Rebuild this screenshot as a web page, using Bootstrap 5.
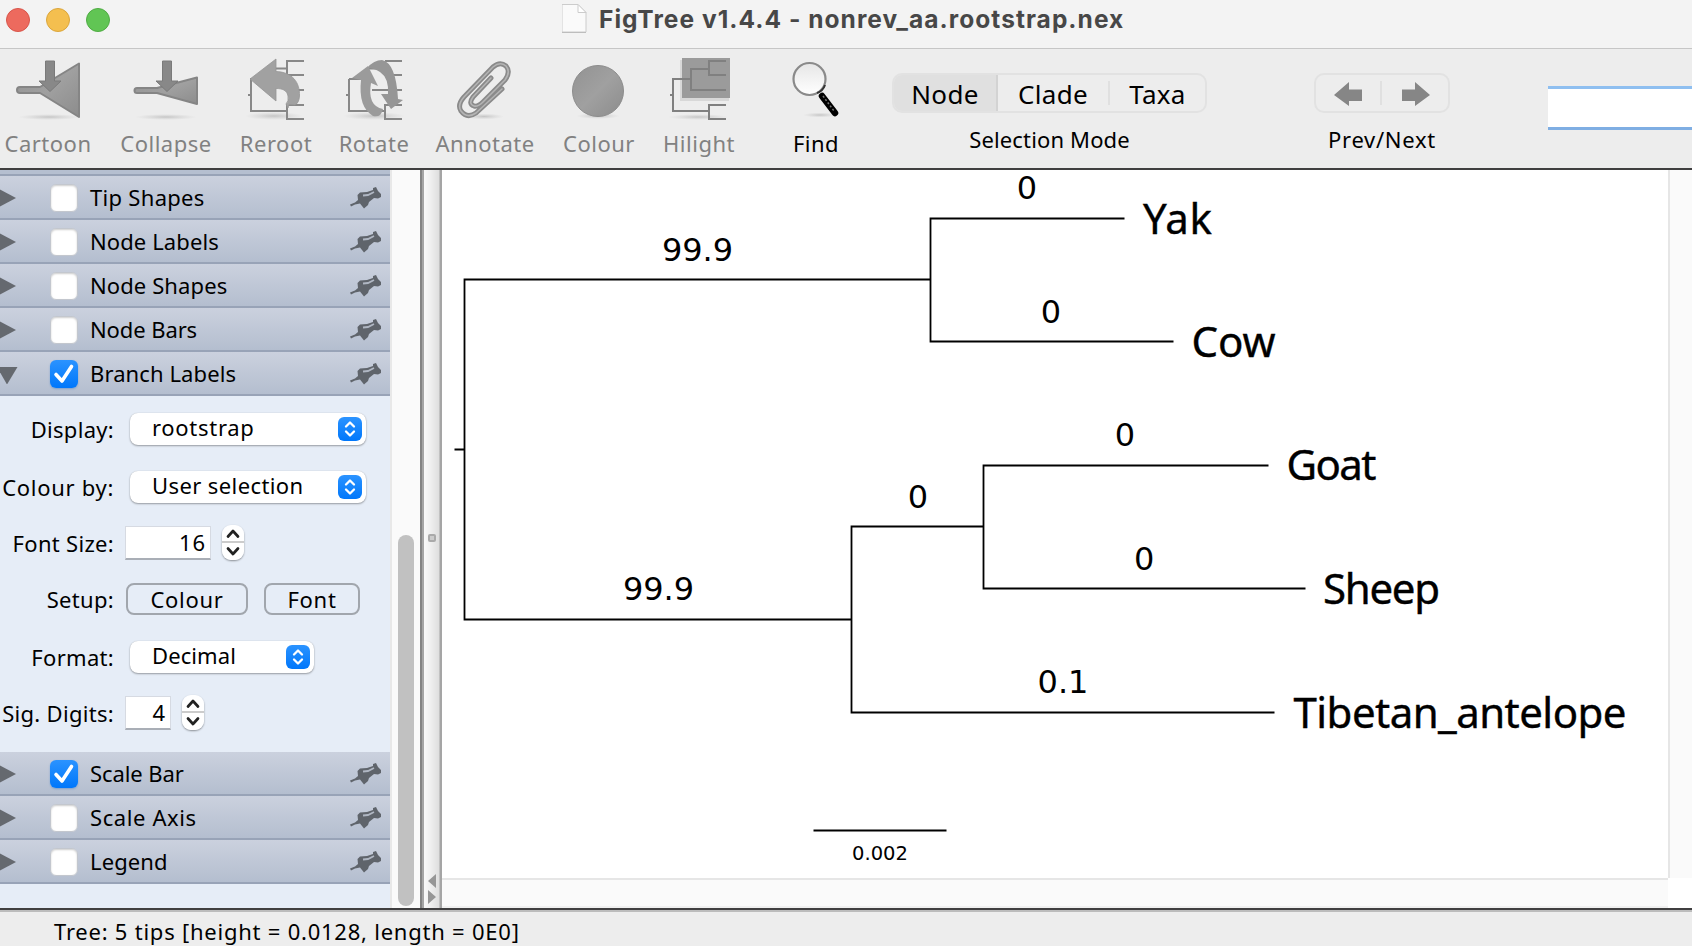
<!DOCTYPE html>
<html lang="en">
<head>
<meta charset="utf-8">
<title>FigTree v1.4.4 - nonrev_aa.rootstrap.nex</title>
<link href="https://cdn.jsdelivr.net/npm/bootstrap@5.3.0/dist/css/bootstrap.min.css" rel="stylesheet">
<style>
  body{width:1692px;height:946px;font:22px/30px "Noto Sans","Open Sans",sans-serif;color:#000;background:#ededed}
  svg{display:block;flex:none}
  .titlebar{height:49px;background:#f3f3f3;border-bottom:1px solid #c6c6c6}
  .titlebar h1{font:700 24.5px/38px Inter,"Liberation Sans",sans-serif;color:#474747;margin-left:12px;letter-spacing:1.04px}
  .lights{width:562px;padding-left:6px;gap:16px}
  .light{width:24px;height:24px;border-radius:50%;border:1px solid}
  .toolbar{height:121px;border-bottom:2px solid #403f40;background:#ededed}
  .tool{color:#818181;padding-top:7px;letter-spacing:.5px}
  .tool span{margin-top:4px}
  .w96{width:96px}.w140{width:140px}.w80{width:80px}.w116{width:116px}.w106{width:106px}.w122{width:122px}.w78{width:78px}
  .tool-group{padding-top:24px}
  .seg{height:40px;border:2px solid #e2e2e2;border-radius:10px;font-size:26px;line-height:36px;overflow:hidden}
  .seg>div{padding-top:1px;letter-spacing:.3px}
  .seg-on{background:#e0e0e0;border-right:2px solid #d3d3d3}
  .seg-line{width:2px;height:24px;background:#e0e0e0}
  .caption{line-height:30px;margin-top:11px;letter-spacing:.15px}
  .search{width:144px;height:44px;margin-top:37px;background:#fff;border-top:3px solid #8fbff0;border-bottom:3px solid #7faee3}
  .workarea{height:738px}
  .side{width:390px;background:#e6edf7}
  .strip{height:6px;background:#b5bfd0;border-bottom:2px solid #98a3b7}
  .head{height:44px;background:linear-gradient(#cbd1de,#b4becf);border-bottom:2px solid #98a3b7;padding:1px 8px 0 0;letter-spacing:.1px}
  .head>svg{margin-top:1px}
  .tri{width:50px}
  .tri svg{margin-top:1px}
  .tick{width:28px;height:28px;border-radius:6px;background:#fff;border:1px solid #c3c7ce;box-shadow:inset 0 1px 2px #0003;margin-right:12px}
  .tick.on{border:0;background:linear-gradient(#2b93ff,#0077fb);box-shadow:0 1px 2px #0a60c855}
  .head .name{margin-top:-1px}
  .panel{height:356px}
  .lab{width:114px;text-align:right;letter-spacing:.3px;white-space:nowrap}
  .lab.wide{letter-spacing:.7px}
  .h66{height:66px}.h50{height:50px}.h62{height:62px}.h46{height:46px}
  .combo{height:32px;border-radius:8px;background:#fff;box-shadow:0 1px 2px #0005,0 0 1px #0003;margin-left:16px;padding:0 4px 0 22px;letter-spacing:.4px}
  .combo span{margin-top:-4px}
  .w236{width:236px}.w184{width:184px}
  .updown{width:24px;height:24px;border-radius:6px;background:linear-gradient(#2b93ff,#0077fb)}
  .field{height:34px;background:#fff;border:1px solid #d6dae2;border-bottom:2px solid #a9aeb6;margin-left:11px;padding-right:4px;text-align:right;line-height:31px;letter-spacing:.9px}
  .w86{width:86px}.w46{width:46px}
  .step{width:22px;height:35px;border-radius:9px;background:linear-gradient(#fff 46%,#ccc 46%,#ccc 52%,#fff 52%);box-shadow:0 1px 2px #0006;margin:-1px 0 0 11px}
  .push{height:32px;border:2px solid #a1a6ad;border-radius:8px;line-height:29px;letter-spacing:.7px}
  .w-col{width:122px;margin-left:12px}.w-font{width:96px;margin-left:16px}
  .track{width:30px;background:#fafafa;border-left:2px solid #e8e8e8;padding:365px 6px 2px 6px}
  .thumb{background:#c1c1c1;border-radius:8px;height:371px}
  .divider{width:22px;background:linear-gradient(90deg,#848484 0 2px,#a5a5a5 2px 4px,#f9f9f9 4px,#f0f0f0 10px,#dedede 19px,#a5a5a5 20px)}
  .canvas{width:1226px;height:708px;background:#fff}
  .hbar{height:30px;background:#fafafa;border-top:2px solid #e6e6e6;border-bottom:2px solid #f0f0f0}
  .vbar{width:24px;height:708px;background:#fafafa;border-left:2px solid #e6e6e6}
  .status{height:38px;border-top:2px solid #403f40;box-shadow:inset 0 2px #bcbcbc;padding:6px 0 0 54px;letter-spacing:.77px;white-space:pre}
  .num{font:32px "DejaVu Sans",sans-serif;text-anchor:middle}
  .tip{font:42px "Noto Sans",sans-serif;stroke:#000;stroke-width:.4px}
</style>
</head>
<body class="overflow-hidden">
<svg width="0" height="0" class="position-absolute">
  <defs>
    <linearGradient id="g" x1="0" y1="0" x2="1" y2="1"><stop offset="0" stop-color="#929292"/><stop offset=".5" stop-color="#a0a0a0"/><stop offset="1" stop-color="#8c8c8c"/></linearGradient>
    <linearGradient id="lens" x1="0" y1="0" x2="0" y2="1"><stop offset="0" stop-color="#e6e6e6"/><stop offset="1" stop-color="#fff"/></linearGradient>
    <radialGradient id="shade"><stop offset="0" stop-color="#bbb" stop-opacity=".8"/><stop offset="1" stop-color="#ccc" stop-opacity="0"/></radialGradient>
    <symbol id="pin" viewBox="0 0 32 24"><path d="M0 18.500 5 16.500 8 14 7.500 9 10 6.500 17 6 23 4 23 2 26 1 28 5 31 8 31 11 28 12.500 24 12 19 16 18 19 14 22.500 12 20 10 17.500 5 18.500 1 20.500Z" fill="#5f646b"/><path d="M13 9.500 18 9 24 6" fill="none" stroke="#b0b7c3" stroke-width="1.800"/></symbol>
    <symbol id="right" viewBox="0 0 17 20"><path d="M0 1.500 16 10 0 18.500Z" fill="#65696f"/></symbol>
    <symbol id="check" viewBox="0 0 28 28"><path d="M6 14.500 12 21 21.500 6.500" fill="none" stroke="#fff" stroke-width="3.600" stroke-linecap="round" stroke-linejoin="round"/></symbol>
    <symbol id="ud" viewBox="0 0 24 24"><path d="M8 9.500 12 5.500 16 9.500M8 14.500 12 18.500 16 14.500" fill="none" stroke="#fff" stroke-width="2.300" stroke-linecap="round" stroke-linejoin="round"/></symbol>
    <symbol id="sp" viewBox="0 0 22 35"><path d="M6 11.500 11 6 16 11.500M6 23.500 11 29 16 23.500" fill="none" stroke="#222" stroke-width="2.700" stroke-linecap="round" stroke-linejoin="round"/></symbol>
  </defs>
</svg>

<header class="titlebar d-flex">
  <div class="lights d-flex pt-2">
    <div class="light" style="background:#ed6a5e;border-color:#d8554a"></div>
    <div class="light" style="background:#f4bf4f;border-color:#dba63c"></div>
    <div class="light" style="background:#61c554;border-color:#4fac43"></div>
  </div>
  <svg width="25" height="34" viewBox="562 0 25 34"><path d="M562 4.500h16l8 8v19.500h-24z" fill="#fafafa" stroke="#ccc"/><path d="M578 4.500v8h8z" fill="#fff" stroke="#ccc"/><path d="M562 32.500h24" stroke="#bdbdbd"/></svg>
  <h1 class="mb-0 text-nowrap">FigTree v1.4.4 - nonrev_aa.rootstrap.nex</h1>
</header>

<div class="toolbar d-flex">
  <div class="tool w96 d-flex flex-column align-items-center">
    <svg width="72" height="68" viewBox="11 56 72 68"><ellipse cx="48" cy="117" rx="31" ry="3" fill="url(#shade)"/><path d="M39 87 78 63.500V117L39 93H19a3 3 0 0 1 0-6z" fill="url(#g)" stroke="#858585" stroke-width="2" stroke-linejoin="round"/><path d="M44.500 61h9v20H60L49 91.500 38 81h6.500z" fill="#888" stroke="#7a7a7a"/></svg>
    <span>Cartoon</span></div>
  <div class="tool w140 d-flex flex-column align-items-center">
    <svg width="72" height="68" viewBox="130 56 72 68"><ellipse cx="166" cy="117" rx="31" ry="3" fill="url(#shade)"/><path d="M157 88 197 77.500V104L157 93H137a2.500 2.500 0 0 1 0-5z" fill="url(#g)" stroke="#858585" stroke-width="2" stroke-linejoin="round"/><path d="M162.500 61h9v20H178L167 91.500 156 81h6.500z" fill="#888" stroke="#7a7a7a"/></svg>
    <span>Collapse</span></div>
  <div class="tool w80 d-flex flex-column align-items-center">
    <svg width="72" height="68" viewBox="240 56 72 68"><ellipse cx="274" cy="116" rx="29" ry="4" fill="url(#shade)"/><path d="M248 95h3M276 79h-25v32h36M304 61h-17v14h17M276 68.500h11M292 90h12M304 105h-17v14h17" fill="none" stroke="#888" stroke-width="2"/><path d="M250 79 276 59V71.500C292 72 300 82 299.500 96Q299 103 295 105L289 104.500 288 108 286 104Q289 101 288 96C287 90 282 88.500 276 88.500V101Z" fill="#a1a1a1" stroke="#959595" stroke-width=".8"/></svg>
    <span>Reroot</span></div>
  <div class="tool w116 d-flex flex-column align-items-center">
    <svg width="72" height="68" viewBox="338 56 72 68"><ellipse cx="374" cy="116" rx="31" ry="4" fill="url(#shade)"/><path d="M346 95h3M349 79v32h36M402 61h-17M367 68.500h18v6.500h17M349 79h12M372 90h30M402 105h-17v14h17" fill="none" stroke="#888" stroke-width="2"/><path d="M367 68Q374 60 382 60Q396 63 398 99L403 100 391 109 381 94H388Q389 78 380 72Q374 68 367 68Z" fill="#969696"/><path d="M352 78 368 66 378 86 371 83Q367 106 383 109Q381 118 373 116Q358 107 361 80Z" fill="#9b9b9b"/></svg>
    <span>Rotate</span></div>
  <div class="tool w106 d-flex flex-column align-items-center">
    <svg width="72" height="68" viewBox="449 56 72 68"><ellipse cx="484" cy="116.500" rx="20" ry="3" fill="url(#shade)"/><g fill="none" stroke-linecap="round" stroke-linejoin="round"><path d="M491 78 473 97Q468 104 474 106Q478 107 483 102L505 80Q511 72 506 66Q500 61 493 67L464 97Q457 105 461 111Q467 119 476 113L502 89" stroke="#8a8a8a" stroke-width="5"/><path d="M491 78 473 97Q468 104 474 106Q478 107 483 102L505 80Q511 72 506 66Q500 61 493 67L464 97Q457 105 461 111Q467 119 476 113L502 89" stroke="#b4b4b4" stroke-width="1.600"/></g></svg>
    <span>Annotate</span></div>
  <div class="tool w122 d-flex flex-column align-items-center">
    <svg width="72" height="68" viewBox="563 56 72 68"><ellipse cx="598" cy="116" rx="22" ry="3" fill="url(#shade)"/><circle cx="598" cy="91" r="25.500" fill="url(#g)" stroke="#8d8d8d"/></svg>
    <span>Colour</span></div>
  <div class="tool w78 d-flex flex-column align-items-center">
    <svg width="72" height="68" viewBox="663 56 72 68"><ellipse cx="698" cy="117" rx="30" ry="3" fill="url(#shade)"/><path d="M680 60h49v41h-49z" fill="#c9c9c9" opacity=".6"/><path d="M682 58h48v40h-48z" fill="#9b9b9b"/><path d="M670 95h3M709 111h-36V79h18M709 69h-18v21h35M726 61h-17v14h17M726 105h-17v14h17" fill="none" stroke="#808080" stroke-width="2"/></svg>
    <span>Hilight</span></div>
  <div class="tool w80 d-flex flex-column align-items-center text-black" style="margin-left:38px">
    <svg width="72" height="68" viewBox="780 56 72 68"><ellipse cx="820" cy="115" rx="17" ry="2.500" fill="url(#shade)"/><circle cx="809.500" cy="79" r="16" fill="url(#lens)" stroke="#8a8a8a" stroke-width="2.200"/><path d="M817 93q6-2 8-8" fill="none" stroke="#333" stroke-width="2"/><path d="m822 96 13 17" stroke="#000" stroke-width="6.500" stroke-linecap="round"/><path d="m823 96 11 15" stroke="#777" stroke-width="1.500" stroke-dasharray="2 2"/></svg>
    <span>Find</span></div>

  <div class="tool-group" style="margin-left:36px;width:315px">
    <div class="seg d-flex align-items-center text-center">
      <div class="seg-on" style="width:104px;height:40px;padding-top:3px">Node</div>
      <div style="width:110px">Clade</div><div class="seg-line"></div><div class="flex-fill">Taxa</div>
    </div>
    <div class="caption text-center">Selection Mode</div>
  </div>
  <div class="tool-group" style="margin-left:107px;width:136px">
    <div class="seg d-flex align-items-center">
      <svg width="64" height="36" viewBox="1316 75 64 36"><path d="m1334 95 15-13v7.500h13V101h-13v5z" fill="#868686"/></svg>
      <div class="seg-line"></div>
      <svg width="64" height="36" viewBox="1382 75 64 36"><path d="m1430 95-15-13v7.500h-13V101h13v5z" fill="#868686"/></svg>
    </div>
    <div class="caption text-center" style="letter-spacing:.7px">Prev/Next</div>
  </div>
  <div class="search" style="margin-left:98px"></div>
</div>

<main class="workarea d-flex">
  <aside class="side">
    <div class="strip"></div>
    <div class="head d-flex align-items-center"><div class="tri"><svg width="17" height="20"><use href="#right"/></svg></div><div class="tick"></div><div class="name flex-fill" style="letter-spacing:.3px">Tip Shapes</div><svg width="32" height="24"><use href="#pin"/></svg></div>
    <div class="head d-flex align-items-center"><div class="tri"><svg width="17" height="20"><use href="#right"/></svg></div><div class="tick"></div><div class="name flex-fill">Node Labels</div><svg width="32" height="24"><use href="#pin"/></svg></div>
    <div class="head d-flex align-items-center"><div class="tri"><svg width="17" height="20"><use href="#right"/></svg></div><div class="tick"></div><div class="name flex-fill">Node Shapes</div><svg width="32" height="24"><use href="#pin"/></svg></div>
    <div class="head d-flex align-items-center"><div class="tri"><svg width="17" height="20"><use href="#right"/></svg></div><div class="tick"></div><div class="name flex-fill" style="letter-spacing:-.1px">Node Bars</div><svg width="32" height="24"><use href="#pin"/></svg></div>
    <div class="head d-flex align-items-center"><div class="tri"><svg width="18" height="20"><path d="M-3 3H17.500L7 20.500Z" fill="#65696f"/></svg></div><div class="tick on"><svg width="28" height="28"><use href="#check"/></svg></div><div class="name flex-fill">Branch Labels</div><svg width="32" height="24"><use href="#pin"/></svg></div>
    <div class="panel">
      <div class="d-flex align-items-center h66"><div class="lab">Display:</div><div class="combo w236 d-flex align-items-center justify-content-between"><span style="letter-spacing:.7px">rootstrap</span><div class="updown"><svg width="24" height="24"><use href="#ud"/></svg></div></div></div>
      <div class="d-flex align-items-center h50"><div class="lab wide">Colour by:</div><div class="combo w236 d-flex align-items-center justify-content-between"><span>User selection</span><div class="updown"><svg width="24" height="24"><use href="#ud"/></svg></div></div></div>
      <div class="d-flex align-items-center h62"><div class="lab">Font Size:</div><div class="field w86">16</div><div class="step"><svg width="22" height="35"><use href="#sp"/></svg></div></div>
      <div class="d-flex align-items-center h50"><div class="lab">Setup:</div><div class="push w-col text-center">Colour</div><div class="push w-font text-center">Font</div></div>
      <div class="d-flex align-items-center h66"><div class="lab">Format:</div><div class="combo w184 d-flex align-items-center justify-content-between"><span style="letter-spacing:.1px">Decimal</span><div class="updown"><svg width="24" height="24"><use href="#ud"/></svg></div></div></div>
      <div class="d-flex align-items-center h46"><div class="lab">Sig. Digits:</div><div class="field w46">4</div><div class="step"><svg width="22" height="35"><use href="#sp"/></svg></div></div>
    </div>
    <div class="head d-flex align-items-center"><div class="tri"><svg width="17" height="20"><use href="#right"/></svg></div><div class="tick on"><svg width="28" height="28"><use href="#check"/></svg></div><div class="name flex-fill" style="letter-spacing:-.1px">Scale Bar</div><svg width="32" height="24"><use href="#pin"/></svg></div>
    <div class="head d-flex align-items-center"><div class="tri"><svg width="17" height="20"><use href="#right"/></svg></div><div class="tick"></div><div class="name flex-fill" style="letter-spacing:.6px">Scale Axis</div><svg width="32" height="24"><use href="#pin"/></svg></div>
    <div class="head d-flex align-items-center"><div class="tri"><svg width="17" height="20"><use href="#right"/></svg></div><div class="tick"></div><div class="name flex-fill">Legend</div><svg width="32" height="24"><use href="#pin"/></svg></div>
  </aside>
  <div class="track"><div class="thumb"></div></div>
  <div class="divider"><svg width="22" height="738" viewBox="420 170 22 738"><rect x="428" y="534" width="8" height="8" rx="2" fill="#aaa"/><rect x="430" y="536" width="4" height="4" fill="#ccc"/><path d="M436 874v14l-8-7zM428 890v14l8-7z" fill="#969696"/></svg></div>
  <div>
    <svg class="canvas" viewBox="442 170 1226 708">
      <path d="M454.500 449.500h10M930 279.500H464.500v340H851M1124.500 218.500H930.500v123H1173.500M983 526.500H851.500v186H1274.500M1268.500 465.500H983.500v123H1305.500M813.500 830.500H946.500" fill="none" stroke="#000" stroke-width="1.800"/>
      <g class="num">
        <text x="697.500" y="261">99.9</text><text x="658.500" y="600">99.9</text>
        <text x="1027" y="199">0</text><text x="1051" y="323">0</text><text x="1125" y="446">0</text>
        <text x="918" y="508">0</text><text x="1144.300" y="570">0</text><text x="1063" y="693">0.1</text>
        <text x="880" y="859.500" style="font-size:19.500px">0.002</text>
      </g>
      <g class="tip">
        <text x="1143" y="233.500" textLength="69">Yak</text>
        <text x="1191.500" y="357" textLength="84">Cow</text>
        <text x="1286.500" y="480" textLength="90">Goat</text>
        <text x="1323" y="604" textLength="117">Sheep</text>
        <text x="1293.500" y="727.500" textLength="333">Tibetan_antelope</text>
      </g>
    </svg>
    <div class="hbar"></div>
  </div>
  <div class="flex-fill bg-white"><div class="vbar"></div></div>
</main>
<footer class="status">Tree: 5 tips [height = 0.0128, length = 0E0]</footer>
<script src="https://cdn.jsdelivr.net/npm/bootstrap@5.3.0/dist/js/bootstrap.bundle.min.js"></script>
</body>
</html>
